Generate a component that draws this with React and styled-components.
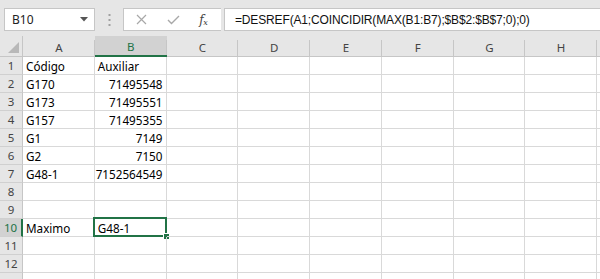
import React from "react";
import styled, { createGlobalStyle, css } from "styled-components";

const GREEN = "#217346";
const GRID = "#d9d9d9";

const Global = createGlobalStyle`
  html, body { margin: 0; padding: 0; background: #fff; overflow: hidden; }
  #root { width: 600px; height: 279px; overflow: hidden; }
`;

const Page = styled.div`
  width: 600px;
  height: 279px;
  overflow: hidden;
  font-family: "Noto Sans", "Liberation Sans", sans-serif;
  background: #fff;
`;

const TopBar = styled.div`
  height: 36px;
  box-sizing: border-box;
  padding: 8px 0 5px 4px;
  background: #e6e6e6;
  display: flex;
  align-items: stretch;
`;

const Box = styled.div`
  background: #fff;
  border: 1px solid #c6c6c6;
  box-sizing: border-box;
  display: flex;
  align-items: center;
`;

const NameBox = styled(Box)`
  width: 91px;
  padding: 0 6px 0 7px;
  justify-content: space-between;
  font-size: 12px;
  color: #222;
`;

const Dots = styled.div`
  width: 28px;
  display: flex;
  align-items: center;
  justify-content: center;
`;

const ButtonsBox = styled(Box)`
  width: 98px;
  justify-content: space-around;
  padding: 0 4px 0 2px;
  border-right: none;
`;

const FxLabel = styled.span`
  font-family: "DejaVu Serif", "Liberation Serif", serif;
  font-style: italic;
  font-size: 12px;
  color: #444;
  letter-spacing: -0.5px;
  sub { font-size: 8px; vertical-align: -1px; }
`;

const FormulaBox = styled(Box)`
  flex: 1;
  margin-left: 3px;
  padding-left: 10px;
  font-size: 12px;
  color: #111;
  white-space: nowrap;
  border-right: none;
  font-family: "Liberation Sans", "Noto Sans", sans-serif;
  letter-spacing: -0.15px;
`;

const Sheet = styled.div`
  display: grid;
  grid-template-columns: 23px repeat(8, 71.75px) 20px;
  grid-template-rows: 21px repeat(13, 18px);
  background: #fff;
`;

const Corner = styled.div`
  background: #e6e6e6;
  border-right: 1px solid #c6c6c6;
  border-bottom: 1px solid #c6c6c6;
  box-sizing: border-box;
  display: flex;
  align-items: flex-end;
  justify-content: flex-end;
  padding: 0 3px 3px 0;
`;

const ColHead = styled.div`
  position: relative;
  box-sizing: border-box;
  background: ${(p) => (p.$active ? "#d2d2d2" : "#e6e6e6")};
  border-bottom: ${(p) => (p.$active ? `2px solid ${GREEN}` : "1px solid #c6c6c6")};
  color: ${(p) => (p.$active ? GREEN : "#444")};
  font-size: 11.5px;
  display: flex;
  align-items: center;
  justify-content: center;
  padding-top: 2px;
  &::after {
    content: "";
    position: absolute;
    right: 0;
    top: 4px;
    bottom: 0;
    width: 1px;
    background: #c6c6c6;
  }
`;

const RowHead = styled.div`
  box-sizing: border-box;
  background: ${(p) => (p.$active ? "#d2d2d2" : "#e6e6e6")};
  border-right: ${(p) => (p.$active ? `2px solid ${GREEN}` : "1px solid #c6c6c6")};
  border-bottom: 1px solid #d0d0d0;
  color: ${(p) => (p.$active ? GREEN : "#444")};
  font-size: 11.5px;
  display: flex;
  align-items: center;
  justify-content: center;
`;

const Cell = styled.div`
  position: relative;
  box-sizing: border-box;
  border-right: 1px solid ${GRID};
  border-bottom: 1px solid ${GRID};
  font-size: 11.7px;
  color: #000;
  display: flex;
  align-items: center;
  white-space: nowrap;
  padding: 0 3px;
  justify-content: ${(p) => (p.$num ? "flex-end" : "flex-start")};
  ${(p) =>
    p.$selected &&
    css`
      &::before {
        content: "";
        position: absolute;
        left: -2px;
        top: -2px;
        right: -1px;
        bottom: -1px;
        border: 2px solid ${GREEN};
        pointer-events: none;
      }
      &::after {
        content: "";
        position: absolute;
        right: -4px;
        bottom: -4px;
        width: 5px;
        height: 5px;
        background: ${GREEN};
        border: 1px solid #fff;
      }
    `}
`;

const CellText = styled.span`
  position: relative;
  z-index: 1;
`;

const cols = ["A", "B", "C", "D", "E", "F", "G", "H", ""];

const data = {
  1: ["Código", "Auxiliar"],
  2: ["G170", "71495548"],
  3: ["G173", "71495551"],
  4: ["G157", "71495355"],
  5: ["G1", "7149"],
  6: ["G2", "7150"],
  7: ["G48-1", "7152564549"],
  10: ["Maximo", "G48-1"],
};

function Caret() {
  return (
    <svg width="8" height="5" viewBox="0 0 8 5">
      <path d="M0 0 L8 0 L4 4.5 Z" fill="#555" />
    </svg>
  );
}

function VDots() {
  return (
    <svg width="3" height="12" viewBox="0 0 3 12">
      <rect x="0.5" y="0" width="2" height="2" fill="#a0a0a0" />
      <rect x="0.5" y="5" width="2" height="2" fill="#a0a0a0" />
      <rect x="0.5" y="10" width="2" height="2" fill="#a0a0a0" />
    </svg>
  );
}

function XIcon() {
  return (
    <svg width="11" height="11" viewBox="0 0 11 11">
      <path d="M1 1 L10 10 M10 1 L1 10" stroke="#a8a8a8" strokeWidth="1.2" fill="none" />
    </svg>
  );
}

function CheckIcon() {
  return (
    <svg width="13" height="10" viewBox="0 0 13 10">
      <path d="M1 5 L4.5 8.5 L12 1" stroke="#a8a8a8" strokeWidth="1.4" fill="none" />
    </svg>
  );
}

function SelectAll() {
  return (
    <svg width="11" height="11" viewBox="0 0 11 11">
      <path d="M11 0 L11 11 L0 11 Z" fill="#b8b8b8" />
    </svg>
  );
}

export default function App() {
  const rows = [];
  for (let r = 1; r <= 13; r++) {
    const active = r === 10;
    rows.push(
      <RowHead key={`rh${r}`} $active={active}>
        {r <= 12 ? r : null}
      </RowHead>
    );
    cols.forEach((c, ci) => {
      const v = data[r] ? data[r][ci] : undefined;
      const isNum = v !== undefined && /^\d+$/.test(v);
      rows.push(
        <Cell key={`c${r}-${ci}`} $num={isNum} $selected={r === 10 && ci === 1}>
          {v !== undefined && <CellText>{v}</CellText>}
        </Cell>
      );
    });
  }
  return (
    <Page>
      <Global />
      <TopBar>
        <NameBox>
          <span>B10</span>
          <Caret />
        </NameBox>
        <Dots>
          <VDots />
        </Dots>
        <ButtonsBox>
          <XIcon />
          <CheckIcon />
          <FxLabel>
            f<sub>x</sub>
          </FxLabel>
        </ButtonsBox>
        <FormulaBox>=DESREF(A1;COINCIDIR(MAX(B1:B7);$B$2:$B$7;0);0)</FormulaBox>
      </TopBar>
      <Sheet>
        <Corner>
          <SelectAll />
        </Corner>
        {cols.map((c, i) => (
          <ColHead key={`h${i}`} $active={c === "B"}>
            {c}
          </ColHead>
        ))}
        {rows}
      </Sheet>
    </Page>
  );
}
